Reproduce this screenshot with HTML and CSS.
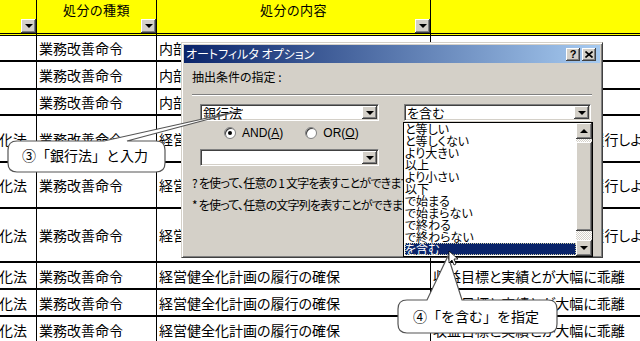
FILE: index.html
```html
<!DOCTYPE html>
<html lang="ja">
<head>
<meta charset="utf-8">
<title>オートフィルタ オプション</title>
<link rel="stylesheet" href="styles.css">
</head>
<body>
<div class="sheet">
  <div class="cell hdr"><span class="fbtn"><i class="tri"></i></span></div>
  <div class="cell hdr"><span class="htxt">処分の種類</span><span class="fbtn"><i class="tri"></i></span></div>
  <div class="cell hdr"><span class="htxt">処分の内容</span><span class="fbtn"><i class="tri"></i></span></div>
  <div class="cell hdr last"></div>

  <div class="cell a"></div>
  <div class="cell">業務改善命令</div>
  <div class="cell">内部管理態勢の充実・強化</div>
  <div class="cell last">管理態勢が不十分</div>

  <div class="cell a"></div>
  <div class="cell">業務改善命令</div>
  <div class="cell">内部管理態勢の充実・強化</div>
  <div class="cell last">管理態勢が不十分</div>

  <div class="cell a"></div>
  <div class="cell">業務改善命令</div>
  <div class="cell">内部管理態勢の充実・強化</div>
  <div class="cell last">管理態勢が不十分</div>

  <div class="cell a">健全化法</div>
  <div class="cell">業務改善命令</div>
  <div class="cell">経営健全化計画の履行の確保</div>
  <div class="cell last shift">経営健全化計画を誠実に履行しようとしない</div>

  <div class="cell a">健全化法</div>
  <div class="cell">業務改善命令</div>
  <div class="cell">経営健全化計画の履行の確保</div>
  <div class="cell last shift">経営健全化計画を誠実に履行しようとしない</div>

  <div class="cell a">健全化法</div>
  <div class="cell">業務改善命令</div>
  <div class="cell">経営健全化計画の履行の確保</div>
  <div class="cell last shift">経営健全化計画を誠実に履行しようとしない</div>

  <div class="cell a">健全化法</div>
  <div class="cell">業務改善命令</div>
  <div class="cell">経営健全化計画の履行の確保</div>
  <div class="cell last">収益目標と実績とが大幅に乖離</div>

  <div class="cell a">健全化法</div>
  <div class="cell">業務改善命令</div>
  <div class="cell">経営健全化計画の履行の確保</div>
  <div class="cell last">収益目標と実績とが大幅に乖離</div>

  <div class="cell a">健全化法</div>
  <div class="cell">業務改善命令</div>
  <div class="cell">経営健全化計画の履行の確保</div>
  <div class="cell last">収益目標と実績とが大幅に乖離</div>
</div>

<div class="dialog">
  <div class="titlebar">
    <span class="title">オートフィルタ オプション</span>
    <span class="tbtns">
      <span class="tbtn">?</span>
      <span class="tbtn"><svg width="8" height="7" viewBox="0 0 8 7"><path d="M0.5 0.5 L7.5 6.5 M7.5 0.5 L0.5 6.5" stroke="#000" stroke-width="1.6" fill="none"/></svg></span>
    </span>
  </div>
  <div class="dbody">
    <div class="label">抽出条件の指定 :</div>
    <div class="sep"></div>
    <div class="crow">
      <div class="combo cleft"><span class="val">銀行法</span><span class="dd"><i class="tri"></i></span></div>
      <div class="combo cright"><span class="val">を含む</span><span class="dd"><i class="tri"></i></span></div>
    </div>
    <div class="radios">
      <span class="radio"><span class="rb on"></span><span class="rl">AND(<u>A</u>)</span></span>
      <span class="radio"><span class="rb"></span><span class="rl">OR(<u>O</u>)</span></span>
    </div>
    <div class="crow second">
      <div class="combo cleft"><span class="val"></span><span class="dd"><i class="tri"></i></span></div>
    </div>
    <div class="hints">
      <div>? を使って、任意の 1 文字を表すことができます。</div>
      <div>* を使って、任意の文字列を表すことができます。</div>
    </div>
  </div>
</div>

<div class="dlist">
  <div class="items">
    <div class="item">と等しい</div>
    <div class="item">と等しくない</div>
    <div class="item">より大きい</div>
    <div class="item">以上</div>
    <div class="item">より小さい</div>
    <div class="item">以下</div>
    <div class="item">で始まる</div>
    <div class="item">で始まらない</div>
    <div class="item">で終わる</div>
    <div class="item">で終わらない</div>
    <div class="item sel">を含む</div>
  </div>
  <div class="sbar">
    <span class="sbtn"><i class="tri up"></i></span>
    <span class="track t1"></span>
    <span class="thumb"></span>
    <span class="track t2"></span>
    <span class="sbtn"><i class="tri"></i></span>
  </div>
</div>

<svg class="overlay" width="640" height="341" viewBox="0 0 640 341">
  <path d="M17,141 L104,141 L243,110 L127,141 L156,141 Q165,141 165,150 L165,163 Q165,172 156,172 L17,172 Q8,172 8,163 L8,150 Q8,141 17,141 Z" fill="#fff" stroke="#555" stroke-width="1.2"/>
  <path d="M407,300 L427,300 L448,256 L462,300 L548,300 Q557,300 557,309 L557,324 Q557,333 548,333 L407,333 Q398,333 398,324 L398,309 Q398,300 407,300 Z" fill="#fff" stroke="#555" stroke-width="1.2"/>
  <path d="M449,251 L449,263 L452,260 L454,265 L456,264 L454,259 L458,259 Z" fill="#fff" stroke="#000" stroke-width="0.8"/>
</svg>
<div class="ctext c1">③「銀行法」と入力</div>
<div class="ctext c2">④「を含む」を指定</div>
</body>
</html>
```

FILE: styles.css
```css
* { box-sizing: border-box; }
html, body { margin: 0; padding: 0; }
body {
  width: 640px;
  height: 341px;
  overflow: hidden;
  background: #fff;
  position: relative;
  font-family: "Noto Sans CJK JP", sans-serif;
  color: #000;
}

/* spreadsheet */
.sheet {
  display: grid;
  grid-template-columns: 37px 120px 274px 209px;
  grid-template-rows: 36px 26px 28px 26px 47px 46px 54px 27px 27px 27px;
}
.cell {
  border-right: 1px solid #000;
  border-bottom: 2px solid #000;
  font-size: 14px;
  line-height: 16px;
  white-space: nowrap;
  overflow: hidden;
  display: flex;
  align-items: center;
  padding-left: 2px;
  font-feature-settings: "palt";
}
.cell.last { border-right: none; }
.cell.a { justify-content: flex-end; padding: 0 9px 0 0; }
.cell.shift { padding-left: 7px; }
.hdr {
  background: #ffff00;
  border-bottom: 3px double #000;
  position: relative;
  align-items: flex-start;
  justify-content: center;
  padding: 2px 0 0 0;
}
.htxt { font-size: 13px; letter-spacing: 0.5px; }
.fbtn {
  position: absolute;
  right: 0;
  bottom: 0;
  width: 15px;
  height: 14px;
  background: #d4d0c8;
  box-shadow: inset -1px -1px #404040, inset 1px 1px #fff, inset -2px -2px #808080;
  display: flex;
  align-items: center;
  justify-content: center;
}
.tri {
  display: block;
  width: 0;
  height: 0;
  border-left: 4px solid transparent;
  border-right: 4px solid transparent;
  border-top: 4px solid #000;
}
.tri.up { border-top: none; border-bottom: 4px solid #000; }

/* dialog */
.dialog {
  position: absolute;
  left: 181px;
  top: 42px;
  width: 422px;
  height: 216px;
  background: #d4d0c8;
  border: 1px solid;
  border-color: #d4d0c8 #404040 #404040 #d4d0c8;
  box-shadow: inset 1px 1px #fff, inset -1px -1px #808080;
  padding: 2px;
  overflow: hidden;
}
.titlebar {
  height: 18px;
  background: linear-gradient(to right, #0a246a, #a6caf0);
  display: flex;
  align-items: center;
  justify-content: space-between;
  padding-left: 2px;
}
.title {
  color: #fff;
  font-size: 12px;
  line-height: 14px;
  font-feature-settings: "palt";
}
.tbtns { display: flex; gap: 2px; margin-right: 4px; }
.tbtn {
  width: 14px;
  height: 13px;
  background: #d4d0c8;
  box-shadow: inset -1px -1px #404040, inset 1px 1px #fff, inset -2px -2px #808080;
  display: flex;
  align-items: center;
  justify-content: center;
  font: bold 11px/11px "Liberation Sans", sans-serif;
}
.dbody { padding: 0 8px; font-size: 12px; font-feature-settings: "palt"; }
.label { margin-top: 7px; height: 14px; line-height: 14px; }
.sep {
  margin-top: 10px;
  height: 2px;
  border-top: 1px solid #808080;
  border-bottom: 1px solid #fff;
}
.crow { display: flex; margin-top: 8px; }
.crow.second { margin-top: 9px; }
.combo {
  position: relative;
  height: 17px;
  background: #fff;
  border: 1px solid;
  border-color: #808080 #fff #fff #808080;
  box-shadow: inset 1px 1px #404040, inset -1px -1px #d4d0c8;
  display: flex;
  align-items: center;
}
.cleft { margin-left: 8px; width: 179px; }
.cright { margin-left: 25px; width: 187px; }
.val { font-size: 13px; line-height: 14px; padding-left: 2px; }
.dd {
  position: absolute;
  right: 1px;
  top: 1px;
  width: 15px;
  height: 13px;
  background: #d4d0c8;
  box-shadow: inset -1px -1px #404040, inset 1px 1px #fff, inset -2px -2px #808080;
  display: flex;
  align-items: center;
  justify-content: center;
}
.radios {
  display: flex;
  margin-top: 4px;
  height: 15px;
  align-items: center;
  padding-left: 32px;
  gap: 22px;
  font-family: "Liberation Sans", sans-serif;
  font-size: 12px;
}
.radio { display: flex; align-items: center; gap: 6px; }
.rl { white-space: nowrap; }
.rb {
  width: 12px;
  height: 12px;
  border-radius: 50%;
  background: #fff;
  border: 1px solid #808080;
  box-shadow: inset 1px 1px #404040;
  display: flex;
  align-items: center;
  justify-content: center;
}
.rb.on::after {
  content: "";
  width: 4px;
  height: 4px;
  border-radius: 50%;
  background: #000;
}
.hints {
  margin-top: 6px;
  line-height: 22px;
  white-space: nowrap;
  font-size: 12px;
  letter-spacing: -0.8px;
}

/* dropdown list */
.dlist {
  position: absolute;
  left: 403px;
  top: 122px;
  width: 190px;
  height: 135px;
  border: 1px solid #000;
  background: #fff;
  display: flex;
}
.items { flex: 1; padding-left: 1px; }
.item {
  height: 12px;
  line-height: 12px;
  font-size: 12px;
  white-space: nowrap;
  font-feature-settings: "palt";
}
.item.sel {
  background: #0a246a;
  color: #fff;
  outline: 1px dotted #c8c8a0;
  outline-offset: -1px;
}
.sbar { width: 16px; display: flex; flex-direction: column; }
.sbtn, .thumb {
  background: #d4d0c8;
  box-shadow: inset -1px -1px #404040, inset 1px 1px #fff, inset -2px -2px #808080;
}
.sbtn { height: 16px; display: flex; align-items: center; justify-content: center; }
.thumb { flex: 1; }
.track { background: repeating-conic-gradient(#d4d0c8 0 25%, #fff 0 50%) 0 0 / 2px 2px; }
.t1 { height: 3px; }
.t2 { height: 9px; }

/* callouts */
.overlay { position: absolute; left: 0; top: 0; }
.ctext {
  position: absolute;
  font-size: 14px;
  line-height: 16px;
  white-space: nowrap;
}
.ctext.c1 { left: 22px; top: 147px; }
.ctext.c2 { left: 413px; top: 308px; }
```
